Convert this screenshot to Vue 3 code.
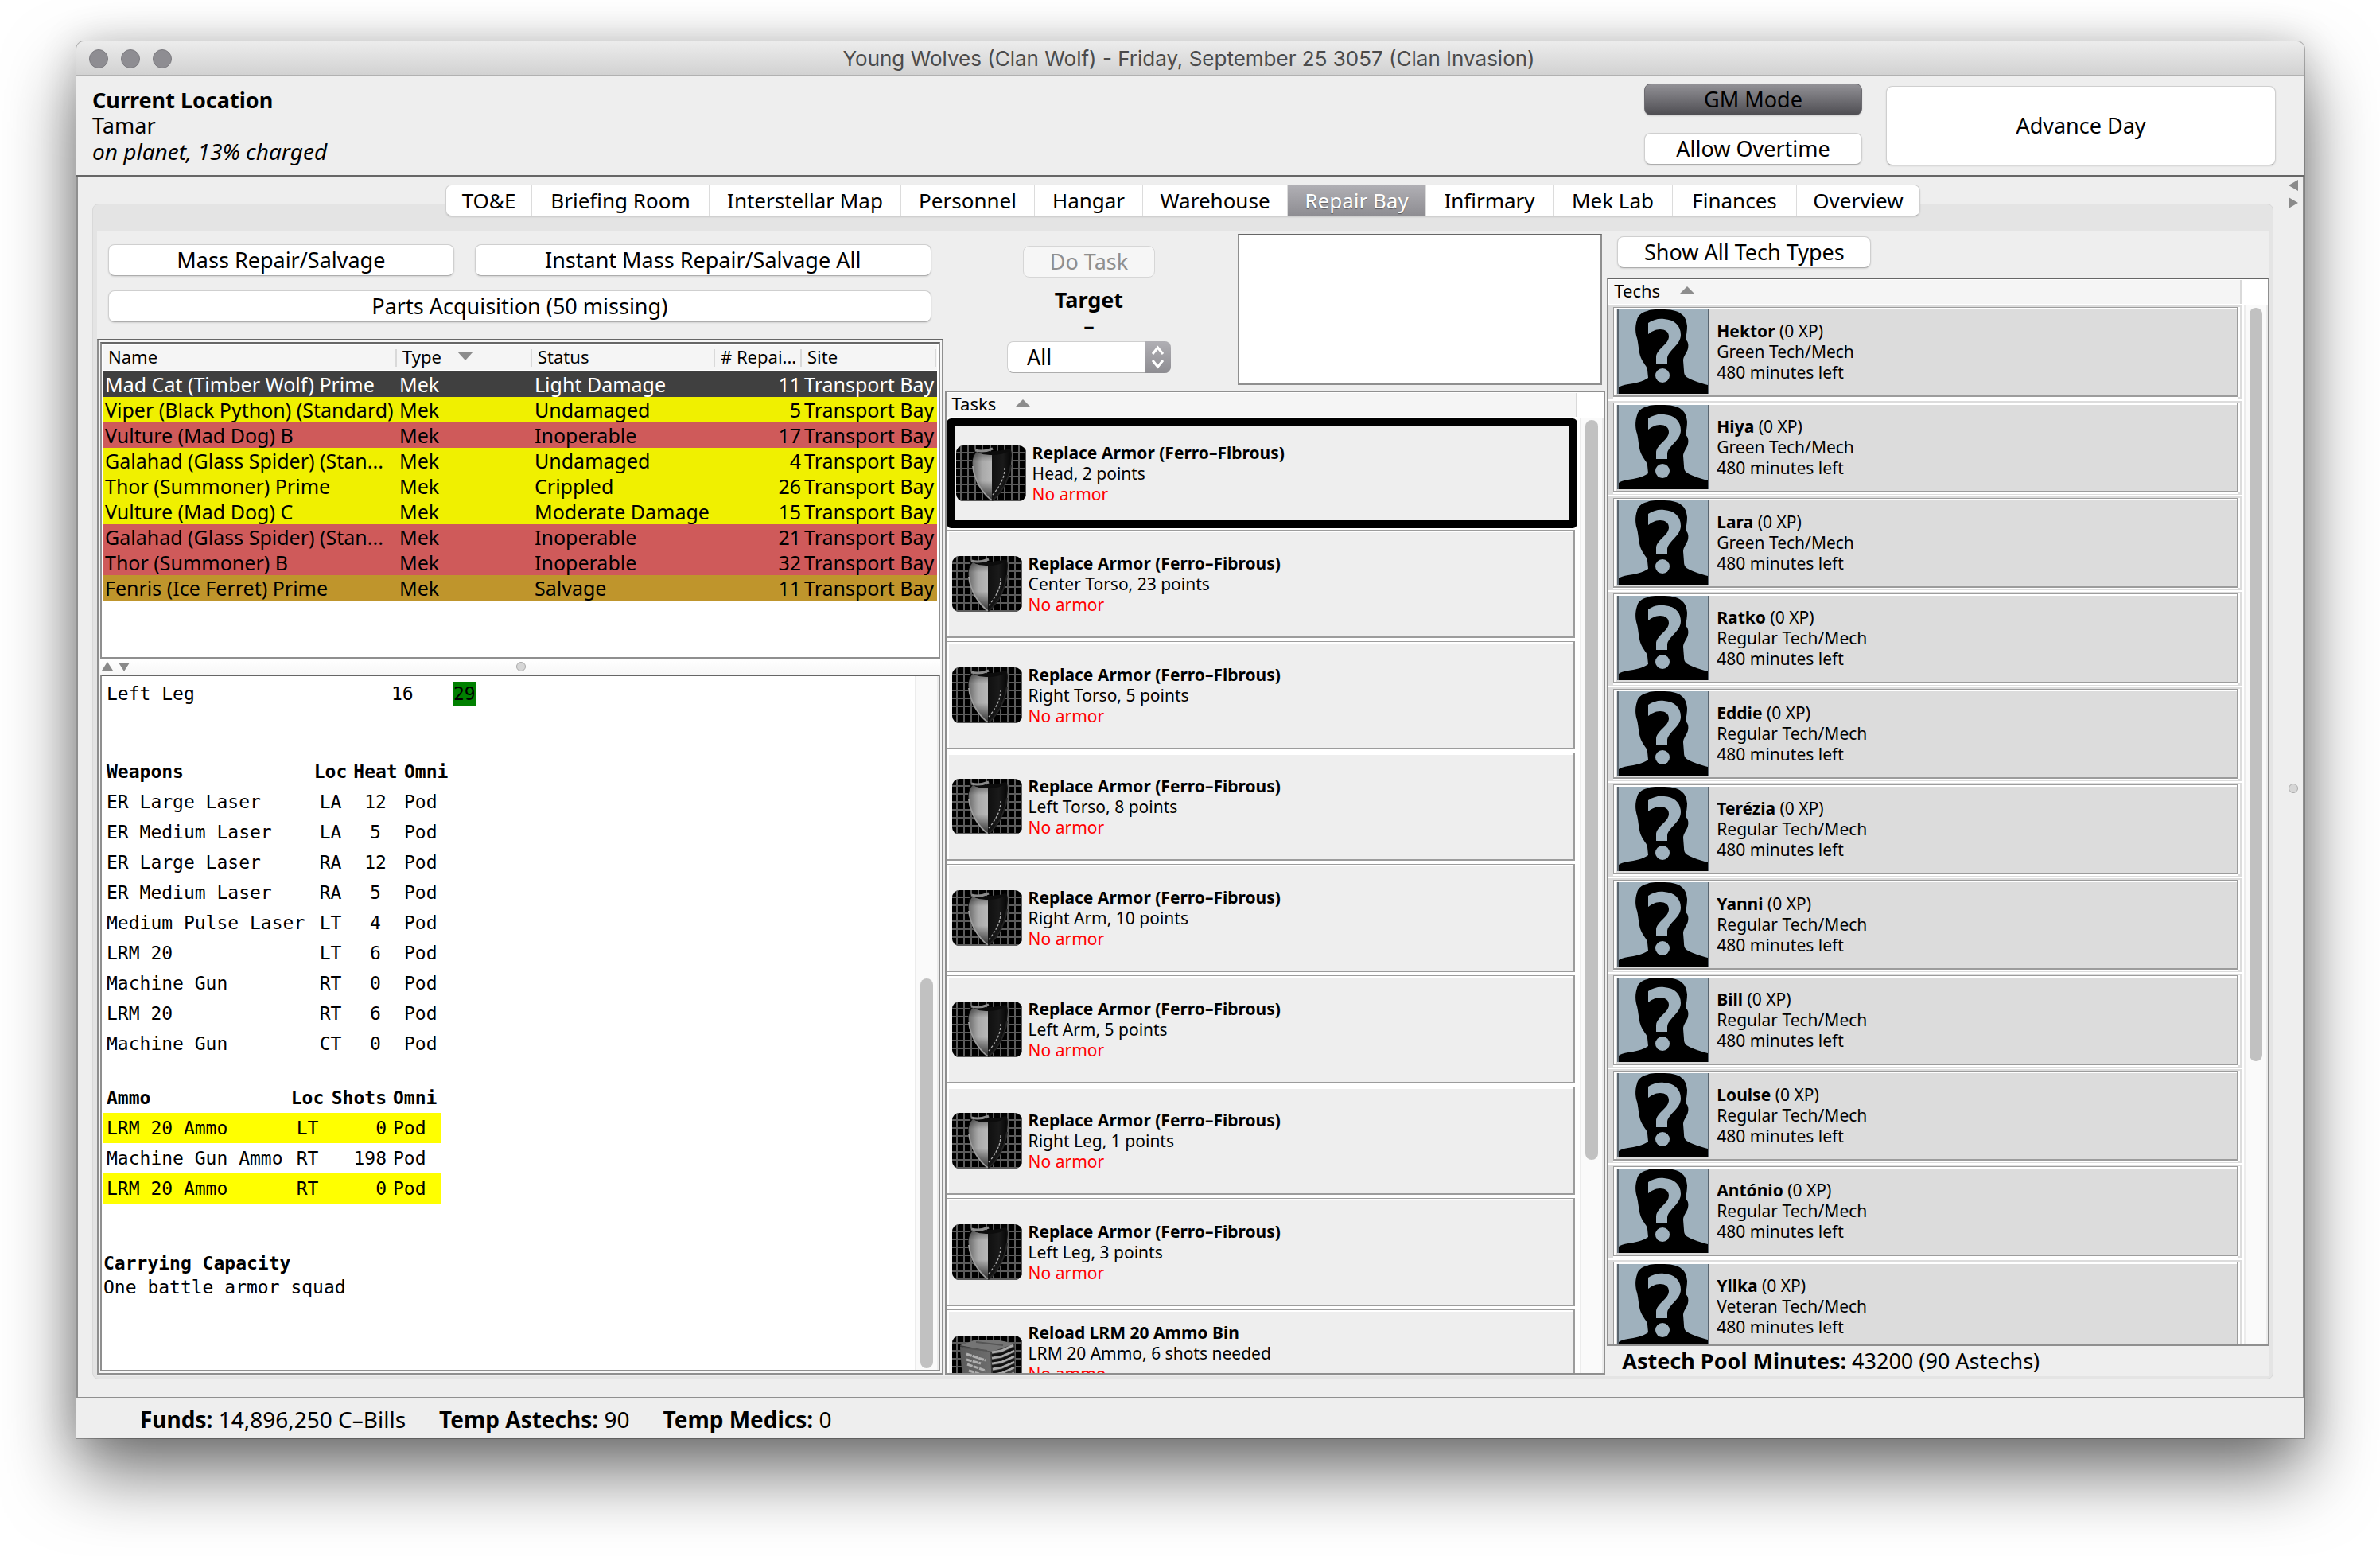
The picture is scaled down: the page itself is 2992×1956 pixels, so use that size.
<script setup>
import { ref } from 'vue'

const tabs = [
  { name: 'TO&E', w: 108 },
  { name: 'Briefing Room', w: 223 },
  { name: 'Interstellar Map', w: 241 },
  { name: 'Personnel', w: 168 },
  { name: 'Hangar', w: 136 },
  { name: 'Warehouse', w: 182 },
  { name: 'Repair Bay', w: 174 },
  { name: 'Infirmary', w: 160 },
  { name: 'Mek Lab', w: 150 },
  { name: 'Finances', w: 156 },
  { name: 'Overview', w: 154 },
]
const activeTab = ref('Repair Bay')
const filter = ref('All')
const notes = ref('')

const units = [
  ['Mad Cat (Timber Wolf) Prime', 'Light Damage', 11, 'selected'],
  ['Viper (Black Python) (Standard)', 'Undamaged', 5, 'yellow'],
  ['Vulture (Mad Dog) B', 'Inoperable', 17, 'red'],
  ['Galahad (Glass Spider) (Stan...', 'Undamaged', 4, 'yellow'],
  ['Thor (Summoner) Prime', 'Crippled', 26, 'yellow'],
  ['Vulture (Mad Dog) C', 'Moderate Damage', 15, 'yellow'],
  ['Galahad (Glass Spider) (Stan...', 'Inoperable', 21, 'red'],
  ['Thor (Summoner) B', 'Inoperable', 32, 'red'],
  ['Fenris (Ice Ferret) Prime', 'Salvage', 11, 'brown'],
]

const weapons = [
  ['ER Large Laser', 'LA', 12],
  ['ER Medium Laser', 'LA', 5],
  ['ER Large Laser', 'RA', 12],
  ['ER Medium Laser', 'RA', 5],
  ['Medium Pulse Laser', 'LT', 4],
  ['LRM 20', 'LT', 6],
  ['Machine Gun', 'RT', 0],
  ['LRM 20', 'RT', 6],
  ['Machine Gun', 'CT', 0],
]

const ammo = [
  ['LRM 20 Ammo', 'LT', 0],
  ['Machine Gun Ammo', 'RT', 198],
  ['LRM 20 Ammo', 'RT', 0],
]

const armor = 'Replace Armor (Ferro–Fibrous)'
const tasks = [
  [armor, 'Head, 2 points', 'No armor'],
  [armor, 'Center Torso, 23 points', 'No armor'],
  [armor, 'Right Torso, 5 points', 'No armor'],
  [armor, 'Left Torso, 8 points', 'No armor'],
  [armor, 'Right Arm, 10 points', 'No armor'],
  [armor, 'Left Arm, 5 points', 'No armor'],
  [armor, 'Right Leg, 1 points', 'No armor'],
  [armor, 'Left Leg, 3 points', 'No armor'],
  ['Reload LRM 20 Ammo Bin', 'LRM 20 Ammo, 6 shots needed', 'No ammo'],
]

const techs = [
  ['Hektor', 'Green'],
  ['Hiya', 'Green'],
  ['Lara', 'Green'],
  ['Ratko', 'Regular'],
  ['Eddie', 'Regular'],
  ['Terézia', 'Regular'],
  ['Yanni', 'Regular'],
  ['Bill', 'Regular'],
  ['Louise', 'Regular'],
  ['António', 'Regular'],
  ['Yllka', 'Veteran'],
]

const gridX = [6, 15, 24, 33, 43, 52, 61, 70, 79, 87]
const gridY = [9, 19, 29, 39, 49, 59, 69]
</script>

<template>
  <div class="desktop">
    <svg class="defs" width="0" height="0" aria-hidden="true">
      <defs>
        <linearGradient id="shieldLight" x1="0" y1="0" x2="1" y2="0">
          <stop offset="0" stop-color="#6a6a6a" />
          <stop offset="0.5" stop-color="#a9a9a9" />
          <stop offset="1" stop-color="#b8b8b8" />
        </linearGradient>
        <linearGradient id="shieldFade" x1="0" y1="0" x2="0" y2="1">
          <stop offset="0" stop-color="#000" stop-opacity="0.4" />
          <stop offset="0.2" stop-color="#000" stop-opacity="0" />
          <stop offset="0.6" stop-color="#000" stop-opacity="0" />
          <stop offset="1" stop-color="#000" stop-opacity="0.75" />
        </linearGradient>
        <linearGradient id="shieldDark" x1="0" y1="0" x2="1" y2="0">
          <stop offset="0" stop-color="#101010" />
          <stop offset="0.6" stop-color="#1a1a1a" />
          <stop offset="1" stop-color="#080808" />
        </linearGradient>
        <linearGradient id="crate" x1="0" y1="0" x2="1" y2="0">
          <stop offset="0" stop-color="#5a5a5a" />
          <stop offset="1" stop-color="#6e6e6e" />
        </linearGradient>
        <clipPath id="iconClip"><rect width="88" height="70" rx="9" /></clipPath>
      </defs>
      <symbol id="iconGrid" viewBox="0 0 88 70">
        <rect width="88" height="70" fill="#000" />
        <path v-for="x in gridX" :key="'x' + x" :d="`M${x} 0V70`" stroke="#5c5c5c" stroke-width="2" />
        <path v-for="y in gridY" :key="'y' + y" :d="`M0 ${y}H88`" stroke="#5c5c5c" stroke-width="2" />
      </symbol>
      <symbol id="iconShield" viewBox="0 0 88 70">
        <g clip-path="url(#iconClip)">
          <use href="#iconGrid" width="88" height="70" />
          <path d="M24 5C36 8 54 8 67 4C71 6 70 14 69 22C68 42 58 58 45 70C30 58 21 42 20 24C20 16 22 8 24 5Z" fill="#0c0c0c" />
          <path d="M45 12C37 12 31 11 26 8C21 14 20 20 21 26C23 44 33 60 45 69Z" fill="url(#shieldLight)" />
          <path d="M45 12C37 12 31 11 26 8C21 14 20 20 21 26C23 44 33 60 45 69Z" fill="url(#shieldFade)" />
          <path d="M45 12C54 12 62 10 67 7C69 14 68 24 66 31C62 46 55 60 45 68Z" fill="url(#shieldDark)" />
          <path d="M21 26C23 44 33 60 45 69" fill="none" stroke="#9a9a9a" stroke-width="2" />
          <path d="M24 6C33 8 39 7 46 4" fill="none" stroke="#8a8a8a" stroke-width="3" />
          <path d="M61 28C61 40 56 50 46 62" fill="none" stroke="#aaa" stroke-width="1.3" stroke-dasharray="3 2" />
          <path d="M69 24C66 44 58 58 46 69" fill="none" stroke="#222" stroke-width="2" />
        </g>
      </symbol>
      <symbol id="iconCrate" viewBox="0 0 88 70">
        <g clip-path="url(#iconClip)">
          <use href="#iconGrid" width="88" height="70" />
          <path d="M10 12L30 5L58 6L79 10L79 64L52 70L14 70Z" fill="#3c3c3c" />
          <path d="M10 12L30 5L60 6L79 10L50 20Z" fill="#757575" />
          <path d="M10 14L48 20L50 70H14Z" fill="url(#crate)" />
          <path d="M18 23L42 31M18 30L36 35M19 36L42 44M21 44L34 48" stroke="#b0b0b0" stroke-width="3" stroke-dasharray="7 1" />
          <path d="M14 15L44 19M30 8L64 12" stroke="#555" stroke-width="2" />
          <path d="M50 21L62 19L77 12M50 28L62 26L78 19M50 35L62 33L78 26M51 42L62 40L78 33M51 49L62 47L78 40M51 56L62 54L78 47" fill="none" stroke="#a9a9a9" stroke-width="3" />
          <path d="M50 25L62 23L78 16M50 32L62 30L78 23M50 39L62 37L78 30M51 46L62 44L78 37" fill="none" stroke="#111" stroke-width="3" />
        </g>
      </symbol>
      <symbol id="portrait" viewBox="0 0 116 106">
        <rect width="116" height="106" fill="#9fb1bd" />
        <path d="M1 0V106M115 0V106" stroke="#5a6670" stroke-width="2" />
        <path
          d="M56 0C48 0 42 0 38 2C30 4 26 8 25 13C22 22 23 30 25 36C27 44 27 54 30 61C33 68 38 72 38 76L39 86C32 91 22 93 14 94C8 95 4 96 2 98V106H114V95C106 93 96 90 89 86C85 84 84 81 84 77L83 64C83 59 88 54 89 49C90 44 89 40 86 38C87 32 88 26 88 21C87 14 86 10 81 6C76 1 66 0 56 0Z"
          fill="#000"
        />
        <path
          d="M39 17C45 13 52 11 59 12C72 13 80 20 80 32C80 45 63 52 63 62V68H49V60C49 50 65 44 65 34C65 28 60 25 54 25C48 25 43 28 39 31Z"
          fill="#9fb1bd"
        />
        <ellipse cx="57" cy="83" rx="9" ry="9" fill="#9fb1bd" />
      </symbol>
    </svg>

    <main class="window">
      <header class="titlebar">
        <div class="lights"><i></i><i></i><i></i></div>
        <h1>Young Wolves (Clan Wolf) - Friday, September 25 3057 (Clan Invasion)</h1>
      </header>

      <section class="top">
        <div class="location">
          <b>Current Location</b>
          <span>Tamar</span>
          <i>on planet, 13% charged</i>
        </div>
        <div class="modes">
          <button type="button" class="btn pressed">GM Mode</button>
          <button type="button" class="btn">Allow Overtime</button>
        </div>
        <button type="button" class="btn advance">Advance Day</button>
      </section>

      <section class="body">
        <div class="tabarea">
          <nav class="tabs" role="tablist">
            <button
              v-for="t in tabs"
              :key="t.name"
              type="button"
              role="tab"
              :class="{ active: t.name === activeTab }"
              :style="{ width: t.w + 'px' }"
              @click="activeTab = t.name"
            >{{ t.name }}</button>
          </nav>

          <div class="pane">
            <div class="columns">
              <section class="col left">
                <div class="actions">
                  <button type="button" class="btn">Mass Repair/Salvage</button>
                  <button type="button" class="btn">Instant Mass Repair/Salvage All</button>
                  <button type="button" class="btn wide">Parts Acquisition (50 missing)</button>
                </div>

                <div class="split">
                  <div class="frame units">
                    <table>
                      <colgroup>
                        <col class="c-name" /><col class="c-type" /><col class="c-status" /><col class="c-rep" /><col />
                      </colgroup>
                      <thead>
                        <tr>
                          <th>Name</th>
                          <th>Type <svg class="sort" width="20" height="11" viewBox="0 0 20 11"><path d="M0 0H20L10 11Z" fill="#8c8c8c" /></svg></th>
                          <th>Status</th>
                          <th># Repai...</th>
                          <th>Site</th>
                        </tr>
                      </thead>
                      <tbody>
                        <tr v-for="(u, i) in units" :key="i" :class="u[3]">
                          <td>{{ u[0] }}</td>
                          <td>Mek</td>
                          <td>{{ u[1] }}</td>
                          <td class="num">{{ u[2] }}</td>
                          <td>Transport Bay</td>
                        </tr>
                      </tbody>
                    </table>
                  </div>

                  <div class="divider" aria-hidden="true">
                    <svg width="36" height="12" viewBox="0 0 36 12"><path d="M0 11H14L7 0ZM21 1H35L28 12Z" fill="#8a8a8a" /></svg>
                    <i class="dot"></i>
                  </div>

                  <div class="frame details">
                    <div class="doc">
                      <table class="armor">
                        <tbody>
                          <tr><td>Left Leg</td><td>16</td><td><mark>29</mark></td></tr>
                        </tbody>
                      </table>
                      <table class="weapons">
                        <thead>
                          <tr><th>Weapons</th><th>Loc</th><th>Heat</th><th>Omni</th></tr>
                        </thead>
                        <tbody>
                          <tr v-for="(w, i) in weapons" :key="i">
                            <td>{{ w[0] }}</td><td>{{ w[1] }}</td><td>{{ w[2] }}</td><td>Pod</td>
                          </tr>
                        </tbody>
                      </table>
                      <table class="ammo">
                        <thead>
                          <tr><th>Ammo</th><th>Loc</th><th>Shots</th><th>Omni</th></tr>
                        </thead>
                        <tbody>
                          <tr v-for="(a, i) in ammo" :key="i" :class="{ empty: a[2] === 0 }">
                            <td>{{ a[0] }}</td><td>{{ a[1] }}</td><td>{{ a[2] }}</td><td>Pod</td>
                          </tr>
                        </tbody>
                      </table>
                      <div class="capacity">
                        <b>Carrying Capacity</b>
                        <span>One battle armor squad</span>
                      </div>
                    </div>
                    <div class="track" aria-hidden="true"><i class="thumb t-doc"></i></div>
                  </div>
                </div>
              </section>

              <section class="col mid">
                <div class="taskbar">
                  <div class="target">
                    <button type="button" class="btn do" disabled>Do Task</button>
                    <b>Target</b>
                    <span>–</span>
                    <div class="picker">
                      <select v-model="filter" aria-label="Task filter">
                        <option>All</option>
                      </select>
                      <svg width="33" height="40" viewBox="0 0 33 40" aria-hidden="true">
                        <path d="M10 16L16.500 8L23 16M10 24L16.500 32L23 24" fill="none" stroke="#fff" stroke-width="3" />
                      </svg>
                    </div>
                  </div>
                  <textarea v-model="notes" aria-label="Task details"></textarea>
                </div>

                <div class="frame list tasks">
                  <div class="listhead">
                    <span>Tasks</span>
                    <svg width="20" height="10" viewBox="0 0 20 10"><path d="M0 10H20L10 0Z" fill="#8c8c8c" /></svg>
                  </div>
                  <div class="scroller">
                    <ul>
                      <li v-for="(t, i) in tasks" :key="i" :class="{ chosen: i === 0, tall: i === 8 }">
                        <svg class="icon" width="88" height="70" aria-hidden="true"><use :href="i === 8 ? '#iconCrate' : '#iconShield'" width="88" height="70" /></svg>
                        <div class="lines">
                          <b>{{ t[0] }}</b>
                          <span>{{ t[1] }}</span>
                          <span class="warn">{{ t[2] }}</span>
                        </div>
                      </li>
                    </ul>
                    <div class="track" aria-hidden="true"><i class="thumb t-tasks"></i></div>
                  </div>
                </div>
              </section>

              <section class="col right">
                <button type="button" class="btn show">Show All Tech Types</button>
                <div class="frame list techs">
                  <div class="listhead">
                    <span>Techs</span>
                    <svg width="20" height="10" viewBox="0 0 20 10"><path d="M0 10H20L10 0Z" fill="#8c8c8c" /></svg>
                  </div>
                  <div class="scroller">
                    <ul>
                      <li v-for="t in techs" :key="t[0]">
                        <div class="card">
                          <svg class="face" width="116" height="106" aria-hidden="true"><use href="#portrait" width="116" height="106" /></svg>
                          <div class="lines">
                            <span><b>{{ t[0] }}</b> (0 XP)</span>
                            <span>{{ t[1] }} Tech/Mech</span>
                            <span>480 minutes left</span>
                          </div>
                        </div>
                      </li>
                    </ul>
                    <div class="track" aria-hidden="true"><i class="thumb t-techs"></i></div>
                  </div>
                </div>
                <p class="pool"><b>Astech Pool Minutes:</b> 43200 (90 Astechs)</p>
              </section>
            </div>
          </div>
        </div>

        <div class="gutter" aria-hidden="true">
          <svg width="12" height="36" viewBox="0 0 12 36"><path d="M12 0V14L0 7ZM0 22V36L12 29Z" fill="#8a8a8a" /></svg>
          <i class="dot"></i>
        </div>
      </section>

      <footer class="status">
        <span><b>Funds:</b> 14,896,250 C–Bills</span>
        <span><b>Temp Astechs:</b> 90</span>
        <span><b>Temp Medics:</b> 0</span>
      </footer>
    </main>
  </div>
</template>

<style>
body {
  margin: 0;
  background: #fff;
}
</style>

<style scoped>
* {
  box-sizing: border-box;
}
.desktop {
  height: 100vh;
  padding: 52px 95px 148px 96px;
  overflow: hidden;
  font-family: "Noto Sans", "Open Sans", sans-serif;
  font-size: 27px;
  line-height: 32px;
  color: #000;
}
.defs {
  position: absolute;
}
.window {
  height: 100%;
  display: flex;
  flex-direction: column;
  background: #eee;
  border-radius: 10px 10px 0 0;
  box-shadow: 0 0 0 1px rgba(0, 0, 0, 0.25), 0 44px 90px rgba(0, 0, 0, 0.55), 0 0 48px rgba(0, 0, 0, 0.16);
}
.titlebar {
  height: 44px;
  display: flex;
  align-items: center;
  padding: 2px 16px 0;
  border-radius: 10px 10px 0 0;
  border-bottom: 2px solid #b1b1b1;
  background: linear-gradient(#ececec, #d2d2d2);
}
.lights {
  display: flex;
  gap: 16px;
  width: 104px;
}
.lights i {
  width: 24px;
  height: 24px;
  border-radius: 50%;
  background: #8e8d92;
  border: 1px solid #7c7b80;
}
h1 {
  flex: 1;
  margin: 0 108px 0 0;
  font: 400 26px/32px Inter, "Liberation Sans", sans-serif;
  color: #4b4b4b;
  text-align: center;
}
.btn {
  height: 40px;
  padding: 0 28px 1px;
  border: 1px solid #cfcfcf;
  border-bottom-color: #adadad;
  border-radius: 8px;
  background: #fff;
  color: #000;
  font: inherit;
  line-height: 32px;
  box-shadow: 0 1px 2px rgba(0, 0, 0, 0.12);
}
.btn:disabled {
  background: #f6f6f6;
  color: #8f8f8f;
  border-color: #d6d6d6;
  box-shadow: none;
}
.btn.pressed {
  background: linear-gradient(#929196, #4f4e53);
  border-color: #6c6b70;
}
.top {
  height: 126px;
  display: flex;
  padding: 9px 36px 0 20px;
  border-bottom: 2px solid #666;
}
.location {
  flex: 1;
  padding-top: 5px;
  display: flex;
  flex-direction: column;
}
.location i {
  font-size: 28px;
}
.modes {
  width: 274px;
  display: flex;
  flex-direction: column;
  gap: 22px;
  margin-right: 30px;
}
.advance {
  width: 490px;
  height: 100px;
  margin-top: 3px;
}
.body {
  flex: 1;
  min-height: 0;
  display: flex;
  border: 2px solid #8f8f8f;
  border-top: 0;
}
.tabarea {
  flex: 1;
  min-width: 0;
  display: flex;
  flex-direction: column;
  padding: 10px 0 22px 18px;
}
.tabs {
  display: flex;
  align-self: center;
  z-index: 1;
  border: 1px solid #d0d0d0;
  border-bottom-color: #adadad;
  border-radius: 8px;
  overflow: hidden;
  box-shadow: 0 1px 2px rgba(0, 0, 0, 0.12);
}
.tabs button {
  height: 38px;
  padding: 0;
  border: 0;
  border-right: 1px solid #dcdcdc;
  background: #fff;
  color: #000;
  font: inherit;
  font-size: 26px;
  line-height: 32px;
}
.tabs button:last-child {
  border-right: 0;
}
.tabs .active {
  background: linear-gradient(#b0afb4, #8e8d92);
  color: #fff;
  text-shadow: 0 1px 1px rgba(0, 0, 0, 0.4);
}
.pane {
  flex: 1;
  min-height: 0;
  margin-top: -16px;
  padding: 33px 4px 3px 5px;
  border: 1px solid #d9d9d9;
  border-radius: 8px;
  background: #e4e4e4;
}
.columns {
  height: 100%;
  display: grid;
  grid-template-columns: 1064fr 831fr 833fr;
  gap: 2px;
  background: #eee;
}
.col {
  min-width: 0;
  min-height: 0;
  display: flex;
  flex-direction: column;
}
.left {
  padding-bottom: 2px;
}
.actions {
  display: grid;
  grid-template-columns: 435fr 574fr;
  gap: 18px 26px;
  padding: 17px 15px 21px 14px;
}
.wide {
  grid-column: 1 / 3;
}
.split {
  flex: 1;
  min-height: 0;
  display: flex;
  flex-direction: column;
  padding: 2px;
  border: 2px solid #8f8f8f;
  border-top-color: #666;
  background: #f6f6f6;
}
.frame {
  min-height: 0;
  border: 2px solid #8f8f8f;
  background: #fff;
  overflow: hidden;
}
.units {
  flex: 390 1 0;
  padding: 2px;
  border-top-color: #666;
  font-size: 25px;
}
table {
  border-collapse: collapse;
  table-layout: fixed;
}
th,
td {
  padding: 0;
  text-align: left;
  white-space: nowrap;
}
.units table {
  width: 100%;
}
.c-name { width: 370px; }
.c-type { width: 170px; }
.c-status { width: 230px; }
.c-rep { width: 109px; }
.units th {
  height: 32px;
  padding: 0 0 4px 6px;
  border-bottom: 2px solid #fff;
  background: linear-gradient(#d9d9d9, #d9d9d9) right 1px center / 2px 22px no-repeat #f5f5f5;
  font-size: 22px;
  font-weight: 400;
  line-height: 26px;
}
.sort {
  margin: 0 0 4px 14px;
}
.units td {
  height: 32px;
  padding: 0 2px;
  line-height: 32px;
}
.units .num {
  text-align: right;
}
.selected { background: #404040; color: #fff; }
.yellow { background: #f0f000; }
.red { background: #cf5a5a; }
.brown { background: #bf952c; }
.divider {
  flex: 0 0 20px;
  display: flex;
  align-items: center;
  padding-left: 2px;
  background: linear-gradient(#fff, #f7f7f7);
}
.divider svg {
  margin-right: -36px;
}
.dot {
  width: 12px;
  height: 12px;
  border-radius: 50%;
  border: 1px solid #aaa;
  background: #d6d6d6;
}
.divider .dot {
  margin: 0 auto;
}
.details {
  flex: 872 1 0;
  display: flex;
  border-top-color: #666;
}
.doc {
  flex: 1;
  padding: 3px 2px 0;
  font: 23px/30px "DejaVu Sans Mono", monospace;
}
.doc th,
.doc td {
  height: 38px;
  padding: 0 4px;
}
.doc .armor { width: 480px; margin-bottom: 60px; }
.armor td:first-child { width: 358px; }
.armor td:nth-child(2) { width: 82px; }
.armor td:last-child { padding: 0; text-align: left; }
mark {
  display: inline-block;
  background: #008000;
  color: #000;
}
.doc .weapons { width: 442px; margin-bottom: 30px; }
.weapons th:first-child { width: 261px; }
.weapons th:nth-child(2) { width: 49px; }
.weapons th:nth-child(3) { width: 64px; }
.doc .ammo { width: 424px; margin-bottom: 60px; }
.ammo th:first-child { width: 232px; }
.ammo th:nth-child(2) { width: 49px; }
.ammo th:nth-child(3) { width: 79px; }
.doc th:nth-child(2),
.weapons td:nth-child(2),
.weapons td:nth-child(3),
.weapons th:nth-child(3),
.ammo td:nth-child(2) {
  padding: 0;
  text-align: center;
}
.ammo td:nth-child(3),
.ammo th:nth-child(3) {
  text-align: right;
}
.empty { background: #ff0; }
.capacity {
  display: flex;
  flex-direction: column;
}
.track {
  flex: 0 0 30px;
  position: relative;
  border: 2px solid #ececec;
  border-width: 0 2px;
  background: #fafafa;
}
.thumb {
  position: absolute;
  left: 5px;
  width: 16px;
  border-radius: 8px;
  background: #c1c1c1;
}
.t-doc { top: 43.6%; bottom: 2px; }
.t-tasks { top: 2px; height: 77.5%; }
.t-techs { top: 3px; height: 72.5%; }
.taskbar {
  flex: 0 0 201px;
  display: flex;
  padding-right: 4px;
}
.target {
  flex: 1;
  display: flex;
  flex-direction: column;
  align-items: center;
  padding: 19px 6px 0 0;
}
.do {
  width: 166px;
  margin-bottom: 12px;
}
.picker {
  position: relative;
  width: 206px;
  margin-top: 4px;
}
.picker select {
  width: 100%;
  height: 40px;
  padding: 0 24px 1px;
  appearance: none;
  border: 1px solid #cfcfcf;
  border-bottom-color: #adadad;
  border-radius: 8px;
  background: #fff;
  color: #000;
  font: inherit;
}
.picker svg {
  position: absolute;
  top: 0;
  right: 0;
  border-radius: 0 8px 8px 0;
  background: linear-gradient(#b0afb4, #8e8d92);
  pointer-events: none;
}
textarea {
  width: 458px;
  height: 190px;
  margin-top: 4px;
  border: 2px solid #8f8f8f;
  border-top-color: #666;
  background: #fff;
  resize: none;
  font: inherit;
}
.list {
  flex: 1;
  display: flex;
  flex-direction: column;
}
.tasks {
  margin-bottom: 2px;
}
.listhead {
  flex: 0 0 30px;
  display: flex;
  align-items: center;
  gap: 24px;
  margin: 1px 33px 2px 1px;
  padding: 0 0 4px 6px;
  background: #f5f5f5;
  border-right: 2px solid #d9d9d9;
  font-size: 22px;
  line-height: 26px;
}
.scroller {
  flex: 1;
  min-height: 0;
  display: flex;
  gap: 3px;
}
ul {
  flex: 1;
  margin: 0;
  padding: 0;
  list-style: none;
  overflow: hidden;
}
.lines {
  display: flex;
  flex-direction: column;
  font-size: 21px;
  line-height: 26px;
}
.warn {
  color: #f00;
}
.tasks li {
  height: 136px;
  display: flex;
  align-items: center;
  gap: 8px;
  margin: 0 3px 4px 0;
  padding: 1px 0 0 6px;
  border: 1px solid #9c9c9c;
  border-width: 1px 2px 2px 1px;
  background: #eee;
  box-shadow: inset 2px 2px #fff;
}
.tasks .chosen {
  height: 138px;
  margin: 0 0 2px;
  padding: 0;
  padding-left: 2px;
  border: 10px solid #000;
  border-radius: 6px;
  box-shadow: none;
}
.tall .lines {
  min-height: 104px;
}
.techs li {
  height: 118px;
  margin-bottom: 2px;
  padding: 2px 4px 3px 6px;
  background: #dcdcdc;
}
.card {
  height: 113px;
  display: flex;
  align-items: center;
  gap: 9px;
  padding: 0 0 0 4px;
  border: 1px solid #9c9c9c;
  border-width: 1px 2px 2px 1px;
  background: #dcdcdc;
  box-shadow: inset 2px 2px #fff, 0 2px #fff, 2px 0 #fff;
}
.show {
  align-self: flex-start;
  width: 319px;
  padding: 0 0 1px;
  margin: 7px 0 12px 13px;
}
.techs {
  border-top-color: #666;
}
.pool {
  flex: 0 0 34px;
  margin: 0;
  padding-left: 19px;
  line-height: 38px;
}
.gutter {
  flex: 0 0 37px;
  display: flex;
  flex-direction: column;
  align-items: center;
  padding: 4px 0 0 12px;
}
.gutter svg {
  flex: none;
  margin-bottom: -36px;
}
.gutter .dot {
  margin: auto;
}
.status {
  flex: 0 0 50px;
  display: flex;
  align-items: center;
  gap: 42px;
  padding: 2px 0 0 80px;
  font-size: 28px;
}
</style>
